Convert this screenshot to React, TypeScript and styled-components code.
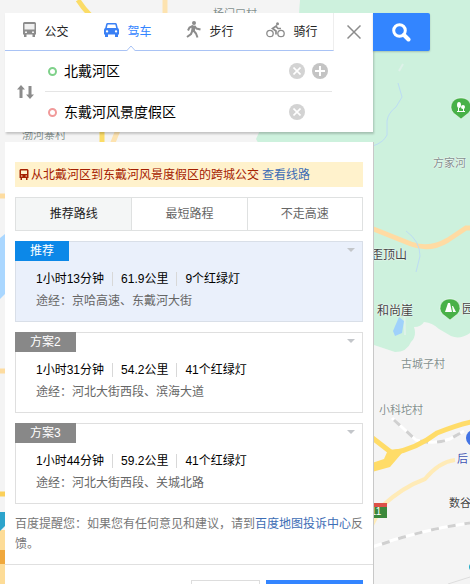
import React, { useState } from "react";
import styled, { createGlobalStyle, css } from "styled-components";

const GlobalStyle = createGlobalStyle`
  *, *::before, *::after { box-sizing: border-box; }
  body {
    margin: 0;
    overflow: hidden;
    background: #f4f4f4;
    font: 12px/20px "Liberation Sans", "Noto Sans CJK SC", sans-serif;
    color: #333;
  }
  button, input { font: inherit; color: inherit; }
  button { padding: 0; border: 0; background: none; cursor: pointer; }
`;

const Page = styled.div`
  position: relative;
  height: 100vh;
  overflow: hidden;
`;

const MapLayer = styled.div`
  position: absolute;
  inset: 0;
  overflow: hidden;
`;

const MapDrawing = styled.svg`
  display: block;
  width: 100%;
  height: 100%;
`;

const MapLabel = styled.span<{ $x: number; $y: number; $tone?: "dark" | "blue"; $size?: number }>`
  position: absolute;
  left: ${(p) => p.$x}px;
  top: ${(p) => p.$y}px;
  font-size: ${(p) => p.$size ?? 11}px;
  line-height: 16px;
  white-space: nowrap;
  color: ${(p) => (p.$tone === "dark" ? "#444" : p.$tone === "blue" ? "#3d51b0" : "#84908e")};
  text-shadow: 0 0 1px #fff, 0 0 2px #fff;
`;

const RoadNumber = styled.span`
  position: absolute;
  left: 366px;
  top: 506px;
  font-size: 10px;
  line-height: 12px;
  color: #fff;
`;

const Overlay = styled.main`
  position: relative;
  display: grid;
  grid-template-columns: minmax(0, 1fr) 57px;
  row-gap: 10px;
  align-items: start;
  padding: 13px 40px 0 5px;
`;

const RouteCard = styled.section`
  background: #fff;
  box-shadow: 1px 2px 2px rgba(0, 0, 0, 0.2);
`;

const RouteHead = styled.div`
  display: flex;
  height: 38px;
`;

const ModeTabs = styled.div`
  flex: 1;
  display: flex;
  border-bottom: 1px solid #a9c3f5;
  border-right: 1px solid #eee;
`;

const ModeTab = styled.button<{ $active: boolean }>`
  position: relative;
  flex: 1;
  display: flex;
  align-items: center;
  justify-content: center;
  gap: 8px;
  color: ${(p) => (p.$active ? "#3385ff" : "#222")};
`;

const ModeIcon = styled.span`
  display: grid;
  margin-bottom: 4px;
`;

const Notch = styled.svg`
  position: absolute;
  left: calc(50% - 2px);
  bottom: -1px;
`;

const CloseButton = styled.button`
  display: grid;
  place-items: center;
  width: 39px;
`;

const RouteFields = styled.div`
  display: grid;
  grid-template-columns: 40px minmax(0, 1fr);
  padding-right: 41px;
`;

const SwapButton = styled.button`
  display: grid;
  place-items: center;
`;

const FieldRow = styled.div`
  display: flex;
  align-items: center;
  height: 40px;
  & + & {
    height: 41px;
    border-top: 1px solid #e5e5e5;
  }
`;

const PointRing = styled.span<{ $color: string }>`
  width: 9px;
  height: 9px;
  margin: 0 7px 0 3px;
  border: 2px solid ${(p) => p.$color};
  border-radius: 50%;
`;

const FieldInput = styled.input`
  flex: 1;
  min-width: 0;
  padding: 0;
  border: 0;
  outline: 0;
  background: none;
  font-size: 14px;
  color: #000;
`;

const FieldActions = styled.div`
  display: grid;
  grid-template-columns: 16px 16px;
  gap: 7px;
  margin-right: 4px;
`;

const RoundButton = styled.button<{ $dark?: boolean }>`
  display: grid;
  place-items: center;
  width: 16px;
  height: 16px;
  border-radius: 50%;
  background: ${(p) => (p.$dark ? "#c4c4c4" : "#d3d3d3")};
`;

const SearchButton = styled.button`
  display: grid;
  place-items: center;
  height: 38px;
  border-radius: 0 2px 2px 0;
  background: #3385ff;
  box-shadow: 0 1px 2px rgba(0, 0, 0, 0.2);
`;

const ResultPanel = styled.section`
  grid-column: 1;
  background: #fff;
  box-shadow: 1px 0 0 #c8c8c8;
`;

const ResultBody = styled.div`
  display: grid;
  gap: 10px;
  padding: 20px 10px 10px;
`;

const Notice = styled.div`
  display: flex;
  align-items: center;
  height: 25px;
  padding-left: 4px;
  background: #fff2cc;
  color: #a52000;
  white-space: nowrap;
  svg { margin-right: 2px; }
  a { margin-left: 3px; }
`;

const TextLink = styled.a`
  color: #3d6db5;
  text-decoration: none;
`;

const StrategyTabs = styled.div`
  display: grid;
  grid-template-columns: repeat(3, 1fr);
  height: 34px;
  border: 1px solid #dfe1e1;
`;

const StrategyTab = styled.button<{ $active: boolean }>`
  color: #666;
  & + & { border-left: 1px solid #dfe1e1; }
  ${(p) => p.$active && css`
    background: #f4f6f6;
    color: #222;
  `}
`;

const PlanList = styled.ol`
  display: grid;
  gap: 10px;
  margin: 0;
  padding: 0;
  list-style: none;
`;

const PlanItem = styled.li<{ $active: boolean }>`
  padding-bottom: 10px;
  box-shadow: inset 0 0 0 1px ${(p) => (p.$active ? "#d9dfe8" : "#dfdfdf")};
  background: ${(p) => (p.$active ? "#eaf0fb" : "#fff")};
`;

const PlanHead = styled.div`
  display: flex;
  justify-content: space-between;
  align-items: flex-start;
`;

const PlanTag = styled.span<{ $active: boolean }>`
  padding: 0 15px;
  line-height: 20px;
  color: #fff;
  background: ${(p) => (p.$active ? "#0c88e8" : "#888")};
`;

const ExpandButton = styled.button`
  display: grid;
  padding: 7px 8px;
`;

const PlanText = styled.div`
  padding: 7px 21px 0;
  line-height: 22px;
`;

const PlanFacts = styled.div`
  display: flex;
  align-items: center;
  color: #000;
`;

const PlanFact = styled.span`
  display: flex;
  align-items: center;
  & + &::before {
    content: "";
    height: 14px;
    margin: 0 8px;
    border-left: 1px solid #d8d8d8;
  }
`;

const PlanVia = styled.div`
  color: #666;
`;

const Reminder = styled.p`
  margin: 0 -6px 0 0;
  color: #777;
`;

const PanelFooter = styled.footer`
  display: flex;
  justify-content: flex-end;
  gap: 6px;
  padding: 15px 10px;
  border-top: 1px solid #e0e0e0;
`;

const FooterButton = styled.button<{ $primary?: boolean }>`
  width: ${(p) => (p.$primary ? 97 : 69)}px;
  height: 30px;
  border: 1px solid ${(p) => (p.$primary ? "#3385ff" : "#ddd")};
  background: ${(p) => (p.$primary ? "#3385ff" : "#fff")};
`;

const BusIcon = () => (
  <svg width="13" height="15" viewBox="0 0 13 15" aria-hidden="true">
    <path fill="#8c8c8c" d="M1.500 0h10Q13 0 13 1.500V12.500H12V15H9.500V12.500h-6V15H1V12.500H0V1.500Q0 0 1.500 0Z" />
    <path fill="#f0f0f0" d="M1.500 2h10v5.500h-10ZM2 9.500h2V11H2ZM9 9.500h2V11H9Z" />
  </svg>
);

const CarIcon = () => (
  <svg width="15" height="14" viewBox="0 0 15 14" aria-hidden="true">
    <path fillRule="evenodd" fill="#3a80f5" d="M3.500 0h8Q12.500 0 12.800 1L13.800 5Q15 5.500 15 7v4.500h-1V14h-3v-2.500H4V14H1v-2.500H0V7Q0 5.500 1.200 5L2.200 1Q2.500 0 3.500 0ZM3.700 1.500 2.800 5h9.400l-.9-3.500ZM3 7.200a1.200 1.200 0 1 0 .1 2.400A1.200 1.200 0 0 0 3 7.200Zm9 0a1.200 1.200 0 1 0 .1 2.400A1.200 1.200 0 0 0 12 7.200Z" />
  </svg>
);

const WalkIcon = () => (
  <svg width="15" height="17" viewBox="0 0 15 17" fill="none" stroke="#8c8c8c" aria-hidden="true">
    <circle cx="8" cy="2" r="2" fill="#8c8c8c" stroke="none" />
    <path strokeWidth="3.600" d="M7.500 4.500 7 10.500" />
    <path strokeWidth="2" d="M7 5 3.500 6.500 2 9.500M8.500 5l2 2.500 4 1M6.500 9.500 5 13l-4 3M7.500 9.500l2.500 3 1.500 4" />
  </svg>
);

const BikeIcon = () => (
  <svg width="19" height="16" viewBox="0 0 19 16" fill="none" stroke="#8c8c8c" aria-hidden="true">
    <circle cx="4" cy="11.500" r="3.200" strokeWidth="1.300" />
    <circle cx="15" cy="11.500" r="3.200" strokeWidth="1.300" />
    <circle cx="11.500" cy="1.800" r="1.500" fill="#8c8c8c" stroke="none" />
    <path strokeWidth="1.700" d="M11 3.500 6.500 6.500 10 9v3.500M10 4.500l2 2h3" />
  </svg>
);

const SwapIcon = () => (
  <svg width="17" height="14" viewBox="0 0 17 14" aria-hidden="true">
    <path fill="#8c8c8c" d="M4 0 8 4.500H5.500V13h-3V4.500H0ZM13 14 9 9.500h2.500V1h3v8.500H17Z" />
  </svg>
);

const NoticeBus = () => (
  <svg width="10" height="11" viewBox="0 0 10 11" aria-hidden="true">
    <path fillRule="evenodd" fill="#a52000" d="M1.500 0h7L9.500 1v8H8.500v2H7V9H3v2H1.500V9H.5V1ZM2 1.500V5h6V1.500ZM2 6.500v1h1.500v-1Zm4.500 0v1H8v-1Z" />
  </svg>
);

const SearchIcon = () => (
  <svg width="19" height="19" viewBox="0 0 19 19" fill="none" stroke="#fff" aria-hidden="true">
    <circle cx="7.500" cy="7.500" r="5.800" strokeWidth="3" />
    <path d="m12 12 4.500 4.500" strokeWidth="4" strokeLinecap="round" />
  </svg>
);

const CrossIcon = () => (
  <svg width="8" height="8" viewBox="0 0 8 8" stroke="#fff" strokeWidth="1.600" aria-hidden="true">
    <path d="m.5.5 7 7m0-7-7 7" />
  </svg>
);

const PlusIcon = () => (
  <svg width="10" height="10" viewBox="0 0 10 10" stroke="#fff" strokeWidth="2" aria-hidden="true">
    <path d="M5 0v10M0 5h10" />
  </svg>
);

const CityMap = () => (
  <MapLayer aria-hidden="true">
    <MapDrawing viewBox="0 0 470 584" preserveAspectRatio="xMinYMin slice">
      <path fill="#f4f4f4" d="M0 0h470v584H0Z" />
      <path fill="#cdf1dd" d="M300 0h170v333q-10 7-19 3l-12-7q-6-6-15-7-3 5-10 5 3 9-3 15-4 10-16 10l-24-8-115-205 40-85Z" />
      <path fill="#aad7ff" d="M0 238 5 234v60l-5 5Z" />
      <g fill="none">
        <path stroke="#fbdc67" strokeWidth="5" d="M78 0q5 8 12 15" />
        <path stroke="#fde3b0" strokeWidth="5" d="M165 0v16M118 130l-6 15" />
        <path stroke="#fbdc67" strokeWidth="5" d="M102 130v15" />
        <path stroke="#fddca0" strokeWidth="5" d="M0 196h6M0 371h6" />
        <path stroke="#fddc97" strokeWidth="6" d="M3 530v54" />
        <path stroke="#fbd05a" strokeWidth="5" d="M0 494h6" />
        <path stroke="#f0a83c" strokeWidth="14" d="M0 557h6" />
        <path stroke="#ffdba3" strokeWidth="5" d="m371 228 40 16q19 7 37-4l18-12h5" />
        <path stroke="#bcdcf4" d="M398 83l4 14-6 10q-8 6-9 14v14q-3 7-14 11M406 231q14 10 14 25l-4 16" />
        <path stroke="#def2e9" strokeWidth="2" d="m403 64-4 7M404 300l1 35" />
        <path stroke="#ffebb7" strokeWidth="4" d="m372 525 10-19q21-19 43-27 14-17 30-19" />
        <path stroke="#fff" strokeWidth="3" d="m392 418 24 22q18 5 34-1l14-8M372 547q48-17 98-24" />
        <path stroke="#d0d0d0" strokeWidth="3" strokeDasharray="8 9" d="m394 420 22 20q18 5 34-1l14-8M382 544q44-15 88-21" />
        <path stroke="#ffdc68" strokeWidth="5" d="m370 436 22 17q24-4 45-20 20-8 34-11" />
        <path stroke="#ddd" d="m448 584 22-7" />
      </g>
      <path fill="#ffdc68" d="m372 463 12-4 4-9 10-1 4 4-12 14-18 5Z" />
      <path fill="#9fd1fb" d="m399 317 5 4-2 12-7 3-2-5Z" />
      <g transform="translate(461 108)">
        <path fill="#48b148" stroke="#fff" strokeOpacity=".5" d="M0-10A9 9 0 0 1 5 7L0 11-5 7A9 9 0 0 1 0-10Z" />
        <g fill="#fff">
          <ellipse cx="-2" cy="-3" rx="2" ry="3" />
          <ellipse cx="2" cy="-1" rx="2" ry="2" />
          <path d="M-3 0h1v3h4V0h1v3h1v1h-8V3h1Z" />
        </g>
      </g>
      <g transform="translate(450 309)">
        <path fill="#48b148" stroke="#fff" strokeOpacity=".5" d="M0-10A9 9 0 0 1 5 7L0 11-5 7A9 9 0 0 1 0-10Z" />
        <path fill="#fff" d="M-2-6h2l2 9h-7ZM2-3h1l3 6H3Z" />
      </g>
      <circle cx="474" cy="438" r="8" fill="#4374e5" />
      <circle cx="474" cy="567" r="5" fill="#18a9c4" />
      <path fill="#2da4cc" d="M0 512h5v14l-5 5Z" />
      <path fill="#3b883b" d="M372 507h15v11h-15Z" />
      <path fill="#dd5147" d="M372 503h15v4h-15Z" />
    </MapDrawing>
    <MapLabel $x={213} $y={6}>杨门口村</MapLabel>
    <MapLabel $x={22} $y={127}>渤河寨村</MapLabel>
    <MapLabel $x={433} $y={155}>方家河</MapLabel>
    <MapLabel $x={371} $y={247} $tone="dark" $size={12}>歪顶山</MapLabel>
    <MapLabel $x={377} $y={303} $tone="dark" $size={12}>和尚崖</MapLabel>
    <MapLabel $x={462} $y={301} $tone="dark" $size={12}>园</MapLabel>
    <MapLabel $x={401} $y={356}>古城子村</MapLabel>
    <MapLabel $x={379} $y={402}>小科坨村</MapLabel>
    <MapLabel $x={457} $y={451} $tone="blue">后</MapLabel>
    <MapLabel $x={449} $y={495} $tone="dark">数谷</MapLabel>
    <RoadNumber>111</RoadNumber>
  </MapLayer>
);

const modes = [
  { name: "公交", Icon: BusIcon },
  { name: "驾车", Icon: CarIcon },
  { name: "步行", Icon: WalkIcon },
  { name: "骑行", Icon: BikeIcon },
];

const strategies = ["推荐路线", "最短路程", "不走高速"];

const plans = [
  { tag: "推荐", facts: ["1小时13分钟", "61.9公里", "9个红绿灯"], via: "京哈高速、东戴河大街" },
  { tag: "方案2", facts: ["1小时31分钟", "54.2公里", "41个红绿灯"], via: "河北大街西段、滨海大道" },
  { tag: "方案3", facts: ["1小时44分钟", "59.2公里", "41个红绿灯"], via: "河北大街西段、关城北路" },
];

export default function App() {
  const [mode, setMode] = useState(1);
  const [strategy, setStrategy] = useState(0);
  const [start, setStart] = useState("北戴河区");
  const [end, setEnd] = useState("东戴河风景度假区");

  return (
    <Page>
      <GlobalStyle />
      <CityMap />
      <Overlay>
        <RouteCard>
          <RouteHead>
            <ModeTabs>
              {modes.map(({ name, Icon }, i) => (
                <ModeTab key={name} $active={i === mode} aria-pressed={i === mode} onClick={() => setMode(i)}>
                  <ModeIcon><Icon /></ModeIcon>
                  {name}
                  {i === mode && (
                    <Notch width="10" height="6" viewBox="0 0 10 6" aria-hidden="true">
                      <path d="M.5 6 5 1l4.500 5" fill="#fff" stroke="#a9c3f5" />
                    </Notch>
                  )}
                </ModeTab>
              ))}
            </ModeTabs>
            <CloseButton aria-label="关闭">
              <svg width="14" height="14" viewBox="0 0 14 14" stroke="#8c8c8c" strokeWidth="1.500" aria-hidden="true">
                <path d="m.5.5 13 13m0-13-13 13" />
              </svg>
            </CloseButton>
          </RouteHead>
          <RouteFields>
            <SwapButton aria-label="交换起点和终点"><SwapIcon /></SwapButton>
            <div>
              <FieldRow>
                <PointRing $color="#7fd18a" />
                <FieldInput aria-label="起点" value={start} onChange={(e) => setStart(e.target.value)} />
                <FieldActions>
                  <RoundButton aria-label="清空起点" onClick={() => setStart("")}><CrossIcon /></RoundButton>
                  <RoundButton $dark aria-label="添加途经点"><PlusIcon /></RoundButton>
                </FieldActions>
              </FieldRow>
              <FieldRow>
                <PointRing $color="#f19a9a" />
                <FieldInput aria-label="终点" value={end} onChange={(e) => setEnd(e.target.value)} />
                <FieldActions>
                  <RoundButton aria-label="清空终点" onClick={() => setEnd("")}><CrossIcon /></RoundButton>
                </FieldActions>
              </FieldRow>
            </div>
          </RouteFields>
        </RouteCard>
        <SearchButton aria-label="搜索"><SearchIcon /></SearchButton>

        <ResultPanel>
          <ResultBody>
            <Notice>
              <NoticeBus />
              从北戴河区到东戴河风景度假区的跨城公交
              <TextLink href="#transit">查看线路</TextLink>
            </Notice>
            <StrategyTabs>
              {strategies.map((name, i) => (
                <StrategyTab key={name} $active={i === strategy} aria-pressed={i === strategy} onClick={() => setStrategy(i)}>
                  {name}
                </StrategyTab>
              ))}
            </StrategyTabs>
            <PlanList>
              {plans.map((plan, i) => (
                <PlanItem key={plan.tag} $active={i === 0}>
                  <PlanHead>
                    <PlanTag $active={i === 0}>{plan.tag}</PlanTag>
                    <ExpandButton aria-label="展开">
                      <svg width="8" height="4" viewBox="0 0 8 4" aria-hidden="true">
                        <path fill="#c3c6ca" d="M0 0h8L4 4Z" />
                      </svg>
                    </ExpandButton>
                  </PlanHead>
                  <PlanText>
                    <PlanFacts>
                      {plan.facts.map((fact) => <PlanFact key={fact}>{fact}</PlanFact>)}
                    </PlanFacts>
                    <PlanVia>途经：{plan.via}</PlanVia>
                  </PlanText>
                </PlanItem>
              ))}
            </PlanList>
            <Reminder>
              百度提醒您：如果您有任何意见和建议，请到<TextLink href="#feedback">百度地图投诉中心</TextLink>反馈。
            </Reminder>
          </ResultBody>
          <PanelFooter>
            <FooterButton aria-label="打印" />
            <FooterButton $primary aria-label="发送到手机" />
          </PanelFooter>
        </ResultPanel>
      </Overlay>
    </Page>
  );
}
